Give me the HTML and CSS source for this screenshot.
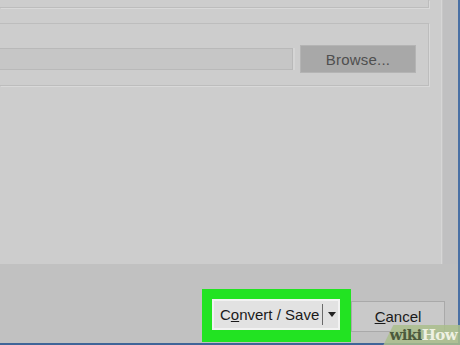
FILE: index.html
```html
<!DOCTYPE html>
<html>
<head>
  <title>Convert / Save</title>
  <link rel="stylesheet" href="styles.css">
</head>
<body>
  <div id="screen">
    <div id="window">
      <div id="dialog">
        <div id="upper">
          <div id="panel">
            <div class="group group-top"></div>
            <div class="group group-dest">
              <div class="file-row">
                <div class="file-input"></div>
                <button class="btn btn-browse">Browse...</button>
              </div>
            </div>
          </div>
          <div id="strip"></div>
        </div>
        <div id="footer">
          <div class="highlight">
            <button class="btn btn-convert">
              <span class="label">C<u>o</u>nvert / Save</span>
              <span class="split"></span>
              <span class="arrow"></span>
            </button>
          </div>
          <button class="btn btn-cancel"><u>C</u>ancel</button>
        </div>
      </div>
      <div class="edge-right"></div>
    </div>
    <div class="edge-bottom"></div>

    <!-- watermark sits on top of the corner -->
    <div class="watermark"><span class="wiki">wiki</span><span class="how">How</span></div>
  </div>
</body>
</html>
```

FILE: styles.css
```css
body {
  margin: 0;
  background-color: #c1c1c1;
  font-family: "Liberation Sans", Arial, sans-serif;
}
#screen {
  position: relative;
  width: 460px;
  height: 345px;
  overflow: hidden;
  display: flex;
  flex-direction: column;
}
#window {
  display: flex;
  height: 343px;
}
#dialog {
  width: 458px;
  display: flex;
  flex-direction: column;
}
.edge-right {
  width: 2px;
  background-color: #4a70a4;
}
.edge-bottom {
  height: 2px;
  background-color: #3f6598;
}
#upper {
  display: flex;
  height: 264px;
}
#panel {
  width: 442px;
  background-color: #cdcdcd;
  box-shadow: inset -1px 0 0 #d6d6d6;
}
#strip {
  flex: 1;
  background-color: #c0c0c1;
  box-shadow: inset 1px 0 0 #c7c7c7;
}
.group {
  width: 428px;
  border-right: 1px solid #bdbdbd;
  border-bottom: 1px solid #bdbdbd;
  box-shadow: 1px 1px 0 #d9d9d9;
}
.group-top {
  height: 7px;
}
.group-dest {
  margin-top: 15px;
  height: 61px;
  border-top: 1px solid #bdbdbd;
}
.file-row {
  display: flex;
  align-items: center;
  margin-top: 21px;
}
.file-input {
  width: 292px;
  height: 20px;
  background-color: #c6c6c6;
  border-top: 1px solid #b9b9b9;
  border-bottom: 1px solid #b9b9b9;
  border-right: 1px solid #b9b9b9;
  box-shadow: 2px 0 0 #d5d5d5;
}
.btn {
  font-family: "Liberation Sans", Arial, sans-serif;
  font-size: 15px;
  padding: 0;
  margin: 0;
  cursor: pointer;
}
.btn-browse {
  margin-left: 7px;
  width: 116px;
  height: 28px;
  background-color: #a8a8a8;
  border: 1px solid #b4b4b4;
  color: #4f4f4f;
  letter-spacing: 0.2px;
}
#footer {
  flex: 1;
  display: flex;
  align-items: flex-start;
  padding-top: 25px;
  padding-left: 202px;
  background-color: #c1c1c1;
}
.highlight {
  background-color: #22e322;
  padding: 10px 11px 12px 10px;
}
.btn-convert {
  display: flex;
  align-items: center;
  width: 128px;
  height: 31px;
  background-color: #e2e2e2;
  border: 2px solid #f2f2f2;
  color: #1a1a1a;
}
.btn-convert .label {
  padding-left: 6px;
  width: 102px;
  text-align: left;
}
.btn-convert .split {
  width: 1px;
  height: 21px;
  background-color: #6a6a6a;
}
.btn-convert .arrow {
  margin-left: 5px;
  width: 0;
  height: 0;
  border-left: 4px solid transparent;
  border-right: 4px solid transparent;
  border-top: 5px solid #222;
}
.btn-cancel {
  margin-top: 12px;
  width: 94px;
  height: 31px;
  background-color: #c9c9c9;
  border: 1px solid #a9a9a9;
  color: #1a1a1a;
}
.watermark {
  position: absolute;
  right: 0;
  bottom: 0;
  height: 20px;
  padding: 0 3px 0 6px;
  white-space: nowrap;
  background-color: rgba(170, 190, 140, 0.85);
  clip-path: polygon(10px 0, 100% 0, 100% 100%, 0 100%);
  font-family: "DejaVu Serif", "Liberation Serif", serif;
  font-weight: bold;
  font-size: 15px;
  line-height: 20px;
  letter-spacing: -0.6px;
}
.watermark .wiki {
  color: #4c5a3c;
}
.watermark .how {
  color: #eef1e2;
}
```
